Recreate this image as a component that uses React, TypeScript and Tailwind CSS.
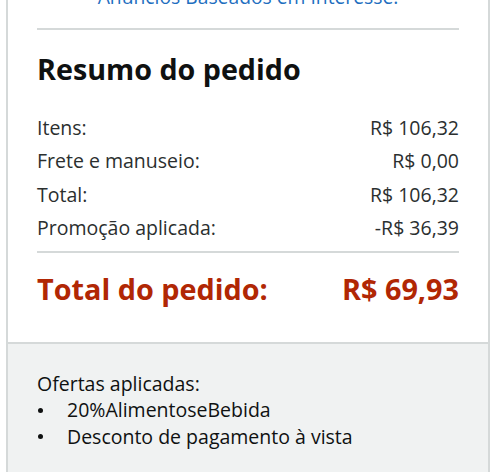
import React from 'react';

const rows: { label: string; value: string }[] = [
  { label: 'Itens:', value: 'R$ 106,32' },
  { label: 'Frete e manuseio:', value: 'R$ 0,00' },
  { label: 'Total:', value: 'R$ 106,32' },
  { label: 'Promoção aplicada:', value: '-R$ 36,39' },
];

const offers = ['20%AlimentoseBebida', 'Desconto de pagamento à vista'];

export default function App() {
  return (
    <div className="h-[472px] w-[500px] overflow-hidden bg-white font-['Open_Sans',sans-serif] text-[#0f1111]">
      <div className="ml-[6px] mr-[10px] flex h-full flex-col border-x-2 border-[#d5d9d9]">
        {/* order summary */}
        <div className="px-[29px]">
          <p className="-mt-[17px] text-center text-[19.3px] leading-[28px] text-[#1f6fbf]">
            Anúncios Baseados em Interesse.
          </p>
          <div className="mt-[17px] h-[2px] bg-[#d5d9d9]" />

          <h2 className="mt-[21px] text-[28.7px] font-bold leading-[36px]">Resumo do pedido</h2>

          <ul className="mt-[24px]">
            {rows.map((r) => (
              <li key={r.label} className="flex justify-between text-[19.5px] leading-[33.3px] text-[#2b2f2f]">
                <span>{r.label}</span>
                <span>{r.value}</span>
              </li>
            ))}
          </ul>

          <div className="mt-[7px] h-[2px] bg-[#d5d9d9]" />

          <div className="mt-[18px] flex justify-between text-[28.8px] font-bold leading-[36px] text-[#b12704]">
            <span>Total do pedido:</span>
            <span>R$ 69,93</span>
          </div>
        </div>

        {/* applied offers */}
        <div className="mt-[35px] flex-1 border-t-2 border-[#d5d9d9] bg-[#f0f2f2] px-[29px] pt-[27px]">
          <p className="text-[19.5px] leading-[26px]">Ofertas aplicadas:</p>
          <ul>
            {offers.map((o) => (
              <li key={o} className="flex items-center text-[19.5px] leading-[26.5px]">
                <span className="ml-[1px] mr-[24px] h-[5px] w-[5px] rounded-full bg-[#0f1111]" />
                <span>{o}</span>
              </li>
            ))}
          </ul>
        </div>
      </div>
    </div>
  );
}
